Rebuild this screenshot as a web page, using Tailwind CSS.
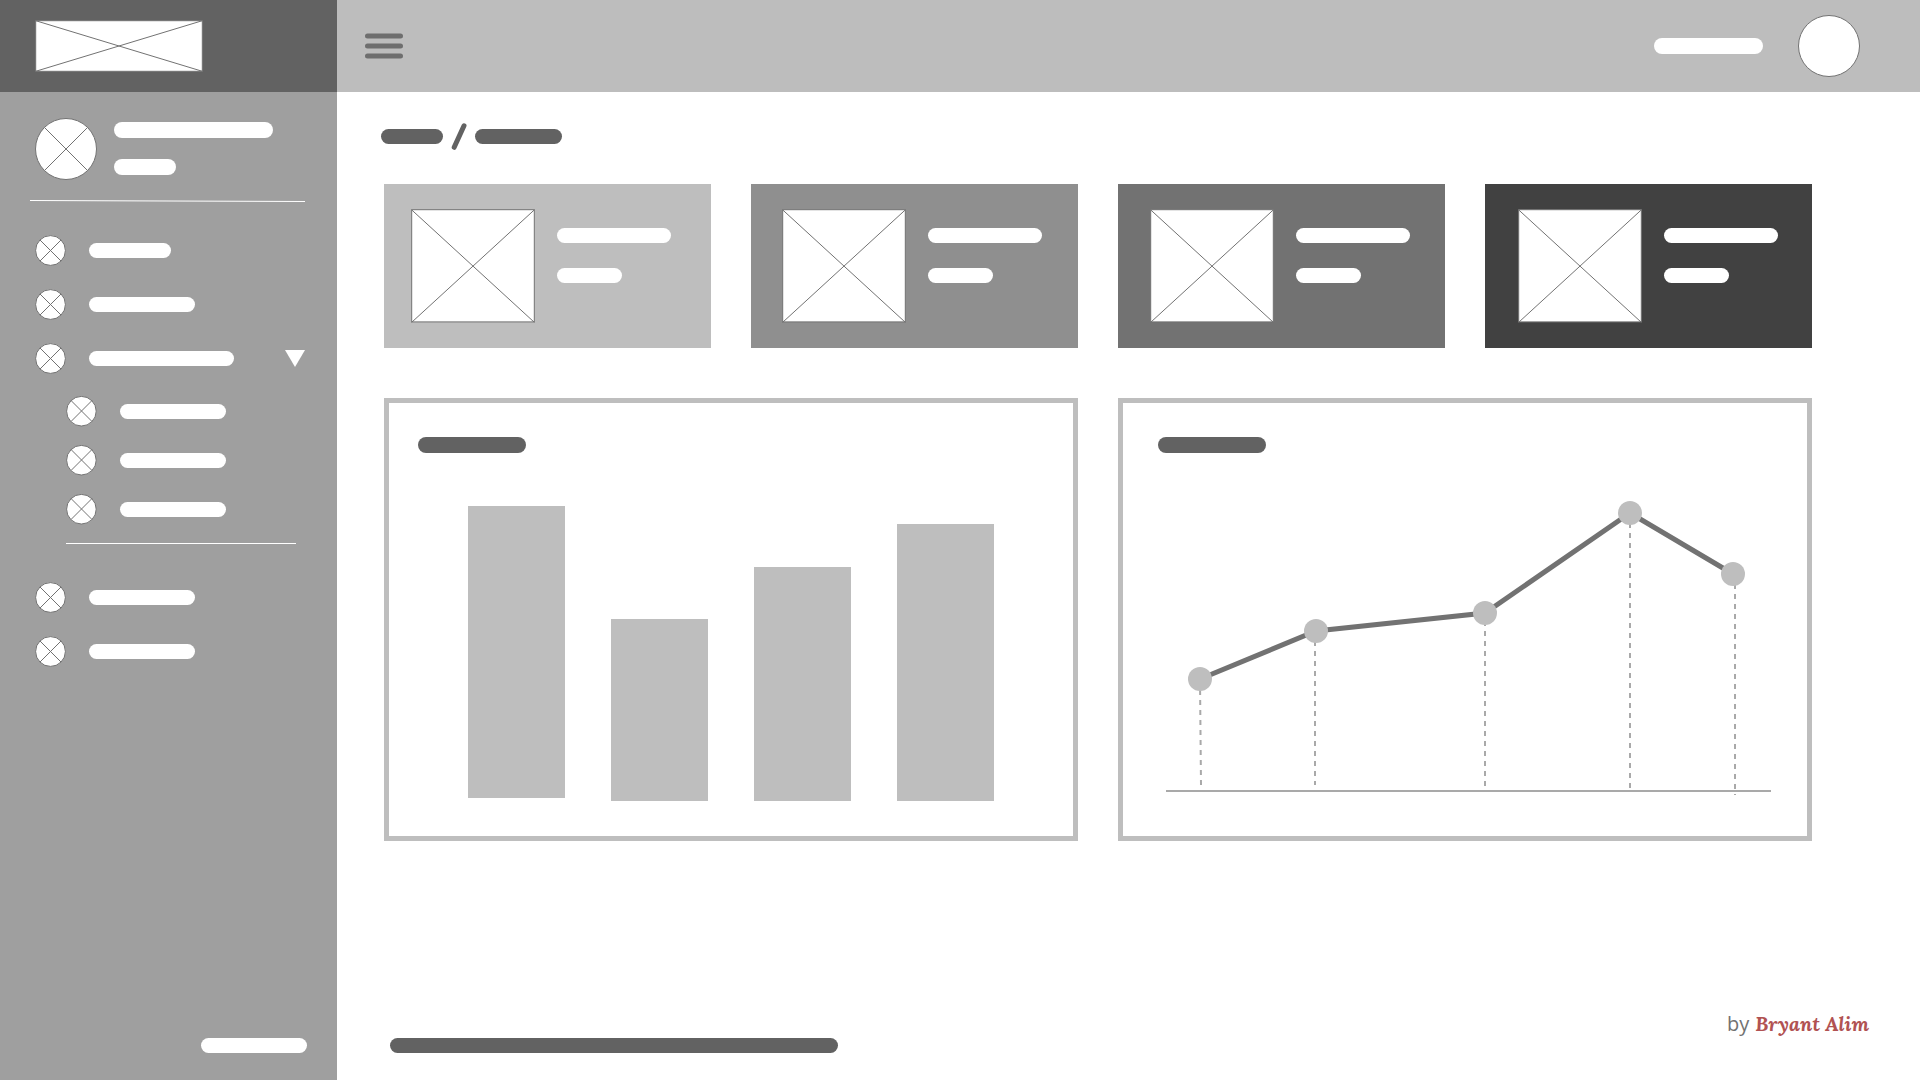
<!DOCTYPE html>
<html lang="en">
<head>
<meta charset="utf-8">
<meta name="viewport" content="width=device-width, initial-scale=1">
<title>Dashboard wireframe</title>
<script src="https://cdn.jsdelivr.net/npm/@tailwindcss/browser@4"></script>
</head>
<body class="flex min-h-screen bg-white font-['Open_Sans',sans-serif]">

<!-- Shared placeholder shapes -->
<svg class="hidden" aria-hidden="true">
  <symbol id="dot" viewBox="0 0 31 31">
    <circle cx="15.5" cy="15.5" r="14.9" fill="#fff" stroke="#727272"/>
    <path d="M5 5L26 26M26 5L5 26" stroke="#727272"/>
  </symbol>
  <symbol id="subdot" viewBox="0 0 31 31">
    <circle cx="15.4" cy="15.2" r="14.8" fill="#fff" stroke="#727272"/>
    <path d="M5 4.5L26 25.5M26 4.5L5 25.5" stroke="#727272"/>
  </symbol>
  <symbol id="picture" viewBox="0 0 124 114">
    <rect x=".7" y=".7" width="122.6" height="112.2" fill="#fff" stroke="#727272"/>
    <path d="M.7 .9L123.3 113.3M123.3 .9L.7 113.3" stroke="#727272"/>
  </symbol>
</svg>

<aside class="flex w-[337px] shrink-0 flex-col bg-[#9f9f9f]">
  <a href="#" aria-label="Home" class="flex h-[92px] items-center bg-[#626262] pl-[35px]">
    <svg class="h-[52px] w-[168px]" viewBox="0 0 168 52">
      <rect x=".7" y=".7" width="166.6" height="50.6" fill="#fff" stroke="#727272"/>
      <path d="M.7 .7L167.3 51.3M167.3 .7L.7 51.3" stroke="#727272"/>
    </svg>
  </a>

  <div class="flex gap-[17px] px-[35px] pt-[26px]">
    <svg class="size-[62px]" viewBox="0 0 62 62">
      <circle cx="31" cy="31" r="30.5" fill="#fff" stroke="#727272"/>
      <path d="M9.5 9.5L52.5 52.5M52.5 9.5L9.5 52.5" stroke="#727272"/>
    </svg>
    <div class="flex flex-col gap-[21px] pt-1">
      <span class="h-4 w-[159px] rounded-full bg-white"></span>
      <span class="h-4 w-[62px] rounded-full bg-white"></span>
    </div>
  </div>

  <svg class="mr-8 ml-[30px] mt-5 h-[2px] self-stretch" viewBox="0 0 275 2" preserveAspectRatio="none">
    <path d="M0 .5L275 1.5" stroke="#fff"/>
  </svg>

  <nav aria-label="Sections" class="mt-[33px]">
    <ul class="flex flex-col gap-[23px] pl-[35px] pr-8">
      <li><a href="#" aria-label="Item 1" class="flex items-center gap-[23px]">
        <svg class="size-[31px]"><use href="#dot"/></svg>
        <span class="h-[15px] w-[82px] rounded-full bg-white"></span>
      </a></li>
      <li><a href="#" aria-label="Item 2" class="flex items-center gap-[23px]">
        <svg class="size-[31px]"><use href="#dot"/></svg>
        <span class="h-[15px] w-[106px] rounded-full bg-white"></span>
      </a></li>
      <li><button type="button" aria-label="Item 3" aria-expanded="true" class="flex w-full items-center gap-[23px]">
        <svg class="size-[31px]"><use href="#dot"/></svg>
        <span class="h-[15px] w-[145px] rounded-full bg-white"></span>
        <svg class="ml-auto h-[17px] w-5" viewBox="0 0 20 17"><path d="M0 0H20L10 17Z" fill="#fff"/></svg>
      </button></li>
    </ul>
    <ul class="mt-[22px] mr-[41px] ml-[66px] flex flex-col gap-[18px] border-b border-white pb-[18px]">
      <li><a href="#" aria-label="Item 3.1" class="flex items-center gap-[23px]">
        <svg class="size-[31px]"><use href="#subdot"/></svg>
        <span class="h-[15px] w-[106px] rounded-full bg-white"></span>
      </a></li>
      <li><a href="#" aria-label="Item 3.2" class="flex items-center gap-[23px]">
        <svg class="size-[31px]"><use href="#subdot"/></svg>
        <span class="h-[15px] w-[106px] rounded-full bg-white"></span>
      </a></li>
      <li><a href="#" aria-label="Item 3.3" class="flex items-center gap-[23px]">
        <svg class="size-[31px]"><use href="#subdot"/></svg>
        <span class="h-[15px] w-[106px] rounded-full bg-white"></span>
      </a></li>
    </ul>
    <ul class="mt-[38px] flex flex-col gap-[23px] pl-[35px] pr-8">
      <li><a href="#" aria-label="Item 4" class="flex items-center gap-[23px]">
        <svg class="size-[31px]"><use href="#dot"/></svg>
        <span class="h-[15px] w-[106px] rounded-full bg-white"></span>
      </a></li>
      <li><a href="#" aria-label="Item 5" class="flex items-center gap-[23px]">
        <svg class="size-[31px]"><use href="#dot"/></svg>
        <span class="h-[15px] w-[106px] rounded-full bg-white"></span>
      </a></li>
    </ul>
  </nav>

  <div class="mt-auto flex justify-end pr-[30px] pb-[27px]">
    <span class="h-[15px] w-[106px] rounded-full bg-white"></span>
  </div>
</aside>

<div class="flex min-w-0 flex-1 flex-col">
  <header class="flex h-[92px] items-center bg-[#bdbdbd] pr-[60px] pl-7">
    <button type="button" aria-label="Menu">
      <svg class="block h-[26px] w-[38px]" viewBox="0 0 38 26" stroke="#6e6e6e" stroke-width="5" stroke-linecap="round">
        <path d="M2.5 3H35.5M2.5 13H35.5M2.5 23H35.5"/>
      </svg>
    </button>
    <span class="ml-auto h-4 w-[109px] rounded-full bg-white"></span>
    <button type="button" aria-label="Account" class="ml-[35px] size-[62px] rounded-full border border-[#727272] bg-white"></button>
  </header>

  <main>
    <nav aria-label="Breadcrumb" class="flex items-center gap-2 pt-[30px] pl-11">
      <a href="#" aria-label="Parent" class="h-[15px] w-[62px] rounded-full bg-[#626262]"></a>
      <svg class="h-7 w-4" viewBox="0 0 16 28"><path d="M3.2 25.3L13 3.8" stroke="#626262" stroke-width="5" stroke-linecap="round"/></svg>
      <span class="h-[15px] w-[87px] rounded-full bg-[#626262]"></span>
    </nav>

    <section aria-label="Summary" class="mt-[34px] mr-[108px] ml-[47px] grid grid-cols-4 gap-10">
      <article class="flex h-[164px] gap-[22px] bg-[#bebebe] pt-[25px] pl-[27px]">
        <svg class="h-[114px] w-[124px] shrink-0"><use href="#picture"/></svg>
        <div class="flex flex-col gap-[25px] pt-[19px]">
          <span class="h-[15px] w-[114px] rounded-full bg-white"></span>
          <span class="h-[15px] w-[65px] rounded-full bg-white"></span>
        </div>
      </article>
      <article class="flex h-[164px] gap-[22px] bg-[#8f8f8f] pt-[25px] pl-[31px]">
        <svg class="h-[114px] w-[124px] shrink-0"><use href="#picture"/></svg>
        <div class="flex flex-col gap-[25px] pt-[19px]">
          <span class="h-[15px] w-[114px] rounded-full bg-white"></span>
          <span class="h-[15px] w-[65px] rounded-full bg-white"></span>
        </div>
      </article>
      <article class="flex h-[164px] gap-[22px] bg-[#727272] pt-[25px] pl-8">
        <svg class="h-[114px] w-[124px] shrink-0"><use href="#picture"/></svg>
        <div class="flex flex-col gap-[25px] pt-[19px]">
          <span class="h-[15px] w-[114px] rounded-full bg-white"></span>
          <span class="h-[15px] w-[65px] rounded-full bg-white"></span>
        </div>
      </article>
      <article class="flex h-[164px] gap-[22px] bg-[#414141] pt-[25px] pl-[33px]">
        <svg class="h-[114px] w-[124px] shrink-0"><use href="#picture"/></svg>
        <div class="flex flex-col gap-[25px] pt-[19px]">
          <span class="h-[15px] w-[114px] rounded-full bg-white"></span>
          <span class="h-[15px] w-[65px] rounded-full bg-white"></span>
        </div>
      </article>
    </section>

    <section aria-label="Charts" class="mt-[50px] mr-[108px] ml-[47px] grid grid-cols-2 gap-10">
      <article class="border-5 border-[#bebebe] pt-[34px] pb-[35px]">
        <div class="ml-[29px] h-4 w-[108px] rounded-full bg-[#626262]"></div>
        <div class="mx-[79px] mt-[53px] grid h-[295px] grid-cols-4 items-end gap-[46px]">
          <div class="mb-[3px] bg-[#bebebe]" style="height:292px"></div>
          <div class="bg-[#bebebe]" style="height:182px"></div>
          <div class="bg-[#bebebe]" style="height:234px"></div>
          <div class="bg-[#bebebe]" style="height:277px"></div>
        </div>
      </article>
      <article class="border-5 border-[#bebebe] pt-[34px]">
        <div class="ml-[35px] h-4 w-[108px] rounded-full bg-[#626262]"></div>
        <svg class="block w-full" viewBox="0 0 684 383" fill="none">
          <path d="M43 338H648" stroke="#a9a9a9" stroke-width="2"/>
          <path d="M77 227L78 332M192 178V332M362 158V333M507 60V335M612 121V342" stroke="#a9a9a9" stroke-width="2" stroke-dasharray="5 5"/>
          <path d="M77 226L193 178L362 160L507 60L610 121" stroke="#727272" stroke-width="5"/>
          <g fill="#bebebe">
            <circle cx="77" cy="226" r="12"/>
            <circle cx="193" cy="178" r="12"/>
            <circle cx="362" cy="160" r="12"/>
            <circle cx="507" cy="60" r="12"/>
            <circle cx="610" cy="121" r="12"/>
          </g>
        </svg>
      </article>
    </section>
  </main>

  <footer class="mt-auto flex items-start justify-between pr-[51px] pb-[27px] pl-[53px]">
    <span class="mt-7 h-[15px] w-[448px] rounded-full bg-[#626262]"></span>
    <p class="flex items-baseline gap-[6px] text-[20px] leading-7 text-[#727272]">by <a href="#" class="font-['Lora','Liberation_Serif',serif] font-bold text-[#b15252] italic">Bryant Alim</a></p>
  </footer>
</div>
</body>
</html>
